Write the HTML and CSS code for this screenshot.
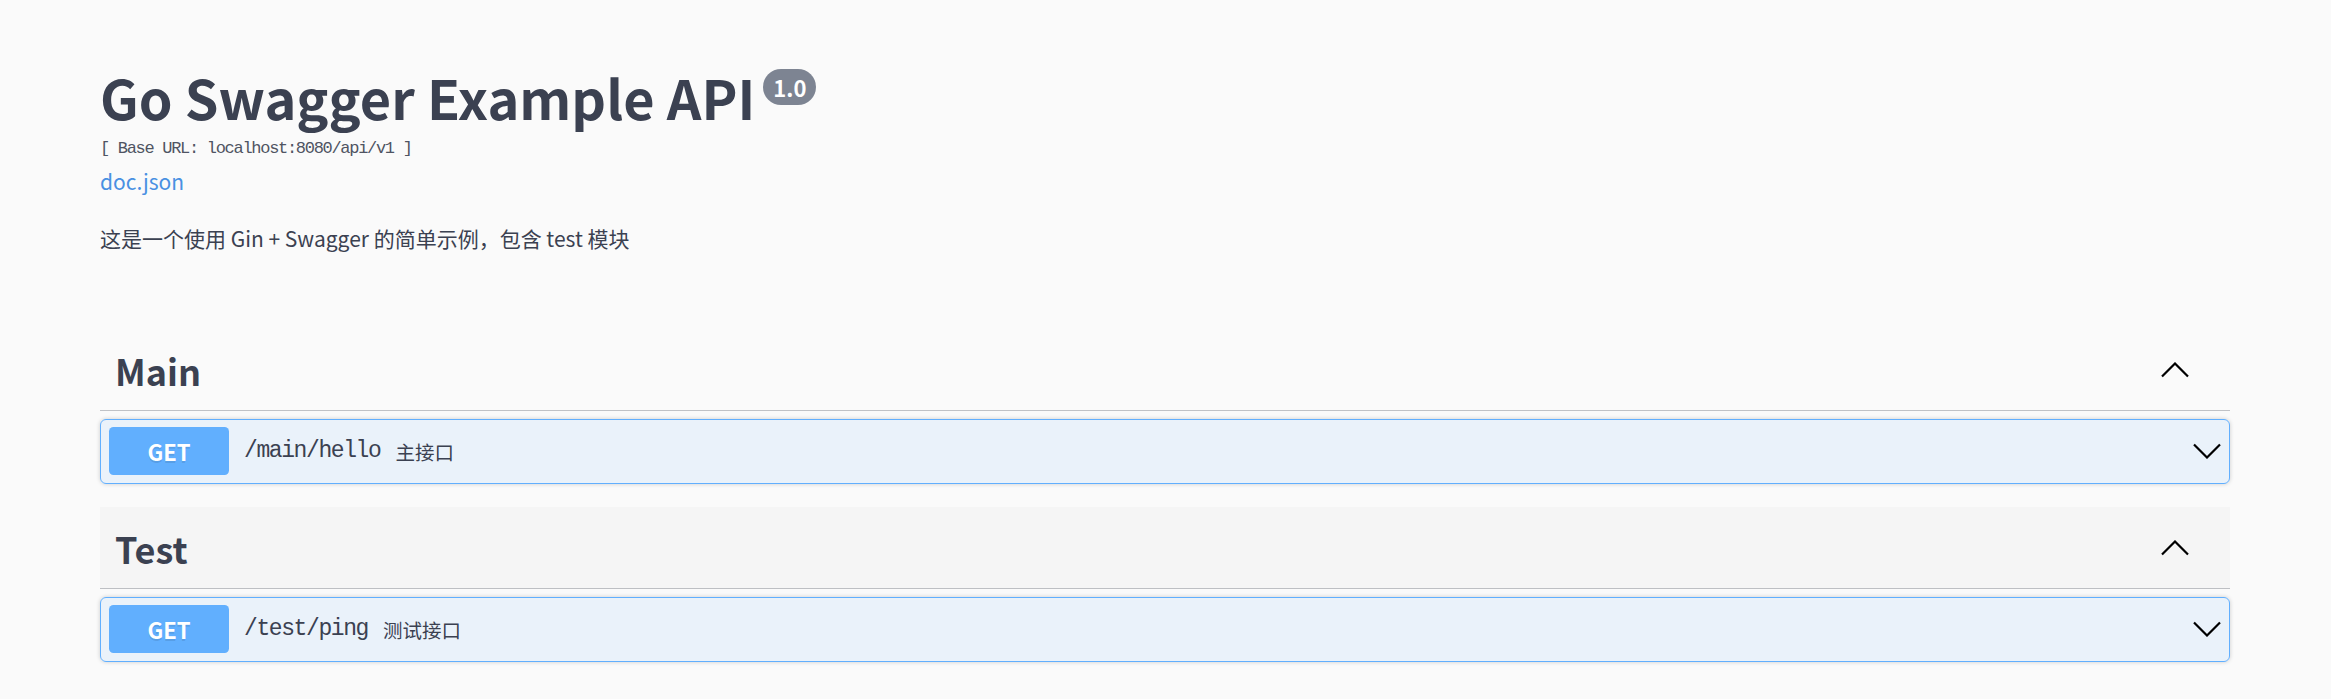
FILE: index.html
```html
<!DOCTYPE html>
<html lang="zh">
<head>
<meta charset="utf-8">
<title>Go Swagger Example API</title>
<link rel="stylesheet" href="styles.css">
</head>
<body>
<div class="wrapper">
  <div class="info">
    <div class="title-row">
      <h2 class="title">Go Swagger Example API</h2>
      <span class="version">1.0</span>
    </div>
    <div class="base-url">[ Base URL: localhost:8080/api/v1 ]</div>
    <a class="doc-link" href="#">doc.json</a>
    <p class="description">这是一个使用 Gin + Swagger 的简单示例，包含 test 模块</p>
  </div>

  <div class="tag-section">
    <h3 class="tag">
      <span class="tag-name">Main</span>
      <svg class="arrow" width="28" height="16" viewBox="0 0 28 16"><polyline points="1,14.5 14,1.5 27,14.5"/></svg>
    </h3>
    <div class="opblock">
      <span class="method">GET</span>
      <span class="path">/main/hello</span>
      <span class="summary">主接口</span>
      <svg class="arrow down" width="28" height="16" viewBox="0 0 28 16"><polyline points="1,1.5 14,14.5 27,1.5"/></svg>
    </div>
  </div>

  <div class="tag-section">
    <h3 class="tag hover">
      <span class="tag-name">Test</span>
      <svg class="arrow" width="28" height="16" viewBox="0 0 28 16"><polyline points="1,14.5 14,1.5 27,14.5"/></svg>
    </h3>
    <div class="opblock">
      <span class="method">GET</span>
      <span class="path">/test/ping</span>
      <span class="summary">测试接口</span>
      <svg class="arrow down" width="28" height="16" viewBox="0 0 28 16"><polyline points="1,1.5 14,14.5 27,1.5"/></svg>
    </div>
  </div>
</div>
</body>
</html>
```

FILE: styles.css
```css
html, body {
  margin: 0;
  padding: 0;
  background: #fafafa;
}
body {
  font-family: "Noto Sans CJK SC", "Noto Sans", sans-serif;
  color: #3b4151;
}
.wrapper {
  padding: 0 101px 0 100px;
}
.info {
  padding-top: 65px;
  padding-bottom: 74px;
}
.title-row {
  display: flex;
  align-items: flex-start;
}
.title {
  margin: 0;
  font-size: 54px;
  line-height: 64px;
  font-weight: 700;
  color: #3b4151;
}
.version {
  margin-left: 8px;
  margin-top: 4px;
  background: #7d8492;
  color: #fff;
  border-radius: 40px;
  padding: 3px 10px;
  font-size: 22px;
  line-height: 30px;
  font-weight: 700;
}
.base-url {
  margin-top: 10px;
  font-family: "Liberation Mono", monospace;
  font-size: 17px;
  letter-spacing: -1.3px;
  line-height: 20px;
  color: #4f5462;
}
.doc-link {
  display: block;
  margin-top: 7px;
  font-size: 21px;
  line-height: 30px;
  color: #4990e2;
  text-decoration: none;
}
.description {
  margin: 27px 0 0;
  font-size: 21px;
  line-height: 31.5px;
  color: #3b4151;
}
.tag {
  display: flex;
  align-items: center;
  margin: 0 0 8px;
  padding: 16px 41px 15px 15px;
  border-bottom: 1px solid rgba(59, 65, 81, 0.3);
  font-size: 36px;
  line-height: 50px;
  font-weight: 700;
  color: #3b4151;
}
.tag.hover {
  background: rgba(0, 0, 0, 0.018);
}
.tag-name {
  flex: 1;
}
.arrow {
  display: block;
  flex: none;
}
.arrow polyline {
  fill: none;
  stroke: #000;
  stroke-width: 2.2;
}
.opblock {
  display: flex;
  align-items: center;
  margin-bottom: 23px;
  padding: 7.5px 7px 7.5px 8px;
  border: 1px solid #61affe;
  border-radius: 6px;
  background: rgba(97, 175, 254, 0.1);
  box-shadow: 0 0 4.5px rgba(0, 0, 0, 0.19);
}
.method {
  flex: none;
  width: 120px;
  height: 48px;
  line-height: 48px;
  text-align: center;
  border-radius: 4.5px;
  background: #61affe;
  color: #fff;
  font-size: 22px;
  font-weight: 700;
  text-shadow: 0 1.5px 0 rgba(0, 0, 0, 0.1);
}
.path {
  padding: 0 15px;
  font-family: "Liberation Mono", monospace;
  font-size: 23px;
  letter-spacing: -1.4px;
  color: #3b4151;
}
.summary {
  flex: 1;
  font-size: 19.5px;
  color: #3b4151;
}
.arrow.down {
  margin-right: 1px;
}
```
